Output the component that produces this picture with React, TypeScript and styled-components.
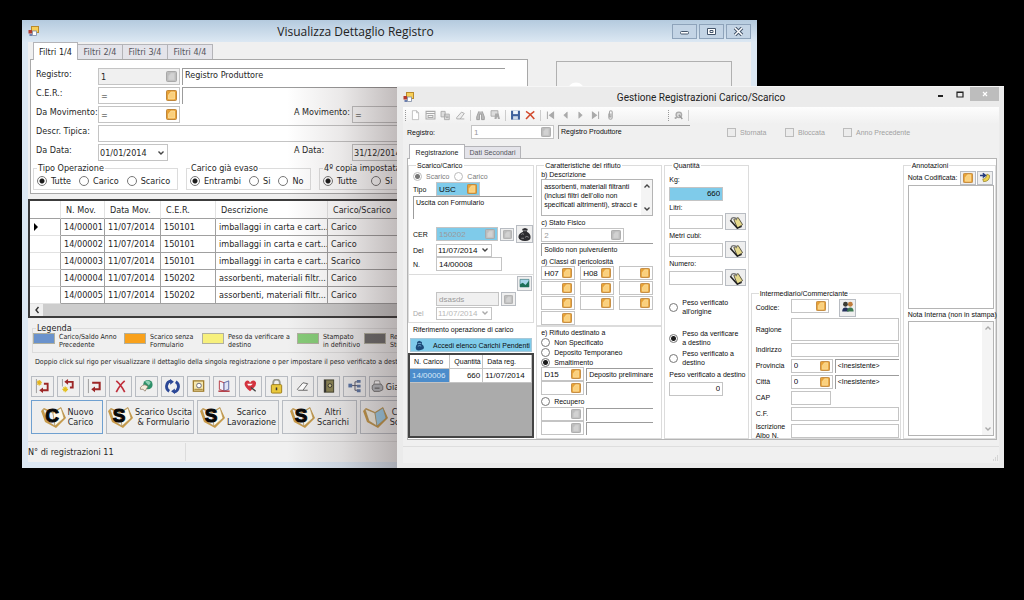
import React from "react";
import styled, { createGlobalStyle, css } from "styled-components";

const tahoma = `"DejaVu Sans Condensed", "DejaVu Sans", Tahoma, sans-serif`;
const sans = `"Liberation Sans", Arial, sans-serif`;

const GlobalStyle = createGlobalStyle`
  * { box-sizing: border-box; }
  body { margin: 0; background: #000; }
  button, input, select, textarea { font: inherit; color: inherit; margin: 0; border-radius: 0; }
  fieldset { margin: 0; padding: 0; min-width: 0; }
  svg { display: block; flex: none; }
`;

const Desktop = styled.main`
  position: relative;
  min-height: 100vh;
  overflow: hidden;
  background: #000;
`;

/* ---------- windows ---------- */

const BackWindow = styled.section`
  position: absolute;
  left: 22px;
  right: 267px;
  top: 20px;
  padding: 0 6px 6px;
  background: linear-gradient(#b4cade 0, #dce8f3 22px, #dde8f3 100%);
  font: 9px/10px ${tahoma};
  color: #262626;
`;

const FrontWindow = styled.section`
  position: absolute;
  left: 397px;
  right: 20px;
  top: 86px;
  padding: 0 5px 5px 6px;
  border-top: 1px solid #f6f6f6;
  background: #ebebeb;
  font: 7px/9px ${sans};
  color: #0c0c0c;
  &::before {
    content: "";
    position: absolute;
    top: 0;
    bottom: 0;
    right: 100%;
    width: 110px;
    pointer-events: none;
    background: linear-gradient(to left, rgba(50, 32, 32, 0.3), rgba(50, 32, 32, 0.1) 50%, transparent);
  }
`;

const BackTitleBar = styled.header`
  display: flex;
  align-items: center;
  gap: 2px;
  height: 22px;
  font: 12px/16px "Open Sans", "Segoe UI", sans-serif;
  color: #222;
`;

const FrontTitleBar = styled.header`
  display: grid;
  grid-template-columns: 1fr auto 1fr;
  align-items: center;
  height: 20px;
  font: 10px/14px Roboto, "Segoe UI", sans-serif;
  color: #222;
`;

const WindowTitle = styled.h1`
  flex: 1;
  margin: 0;
  padding-top: 2px;
  font: inherit;
  text-align: center;
`;

const Captions = styled.div`
  display: flex;
  align-self: start;
  justify-content: flex-end;
  gap: 2px;
`;

const CaptionButton = styled.button`
  display: grid;
  place-items: center;
  width: 25px;
  height: 15px;
  padding: 0;
  border: 1px solid #8ea3ba;
  background: #c3d4e5;
  color: #44556b;
`;

const FlatCaption = styled.button<{ $close?: boolean }>`
  display: grid;
  place-items: center;
  width: ${(p) => (p.$close ? 29 : 17)}px;
  height: 14px;
  padding: 0;
  border: 0;
  background: ${(p) => (p.$close ? "#bdbdbd" : "transparent")};
  color: ${(p) => (p.$close ? "#fff" : "#222")};
`;

const BackBody = styled.div`
  display: flex;
  flex-direction: column;
  background: #f0f0f0;
`;

/* ---------- tabs ---------- */

const TabList = styled.div<{ $small?: boolean }>`
  display: flex;
  align-items: flex-end;
  height: ${(p) => (p.$small ? 18 : 17)}px;
  padding-left: ${(p) => (p.$small ? 6 : 3)}px;
`;

const Tab = styled.button<{ $active?: boolean; $small?: boolean }>`
  width: ${(p) => (p.$small ? 56 : 45)}px;
  height: ${(p) => (p.$small ? 12 : 15)}px;
  padding: 0;
  border: 1px solid #b4b4b8;
  border-left-width: 0;
  border-bottom: 0;
  background: #e4e4ea;
  color: #55555c;
  white-space: nowrap;
  ${(p) =>
    p.$active &&
    css`
      position: relative;
      height: ${p.$small ? 15 : 18}px;
      margin-bottom: -1px;
      border-left-width: 1px;
      background: #fff;
      color: #222;
    `}
`;

/* ---------- shared controls ---------- */

const Group = styled.fieldset`
  border: 1px solid #dcdcdc;
`;

const Legend = styled.legend`
  margin-left: 3px;
  padding: 0 1px;
`;

const Radio = styled.input.attrs({ type: "radio" })`
  appearance: none;
  flex: none;
  width: 10px;
  height: 10px;
  margin: 0;
  border: 1px solid #777;
  border-radius: 50%;
  background: #fff;
  ${FrontWindow} & {
    width: 9px;
    height: 9px;
  }
  &:checked {
    background: radial-gradient(circle, #1c1c1c 0 2px, #fff 3px);
  }
  &:disabled {
    border-color: #bbb;
  }
  &:disabled:checked {
    background: radial-gradient(circle, #777 0 2px, #fff 3px);
  }
`;

const Choice = styled.label<{ $muted?: boolean }>`
  display: flex;
  align-items: center;
  gap: 4px;
  color: ${(p) => (p.$muted ? "#7a7a7a" : "inherit")};
  white-space: nowrap;
`;

type Tone = "white" | "blue" | "gray";
const tones: Record<Tone, string> = { white: "#fff", blue: "#7fcbea", gray: "#f0f0f0" };

const Field = styled.div<{ $w?: number; $h?: number; $tone?: Tone; $muted?: boolean }>`
  display: flex;
  align-items: center;
  flex: ${(p) => (p.$w ? "none" : "1")};
  width: ${(p) => (p.$w ? `${p.$w}px` : "auto")};
  min-width: 0;
  height: ${(p) => p.$h ?? 14}px;
  padding-right: 2px;
  border: 1px solid #c4c4c4;
  background: ${(p) => tones[p.$tone ?? "white"]};
  color: ${(p) => (p.$muted ? "#9a9a9a" : "inherit")};
  ${FrontWindow} & {
    font-size: 8px;
  }
`;

const FieldInput = styled.input<{ $right?: boolean }>`
  flex: 1;
  width: 100%;
  min-width: 0;
  height: 100%;
  padding: 0 0 0 2px;
  border: 0;
  background: transparent;
  outline: 0;
  text-align: ${(p) => (p.$right ? "right" : "left")};
`;

const Inset = styled.output<{ $w?: number; $h?: number }>`
  flex: ${(p) => (p.$w ? "none" : "1")};
  width: ${(p) => (p.$w ? `${p.$w}px` : "auto")};
  min-width: 0;
  height: ${(p) => p.$h ?? 14}px;
  padding: 1px 2px;
  overflow: hidden;
  border-top: 1px solid #9c9c9c;
  border-left: 1px solid #9c9c9c;
  white-space: nowrap;
`;

const PickButton = styled.button`
  flex: none;
  padding: 0;
  border: 0;
  background: transparent;
`;

const DateSelect = styled.select`
  appearance: none;
  flex: 1;
  min-width: 0;
  height: 100%;
  padding: 0 0 0 1px;
  border: 0;
  background: transparent;
  outline: 0;
`;

const ToolButton = styled.button<{ $w?: number; $h?: number }>`
  display: flex;
  flex: none;
  align-items: center;
  justify-content: center;
  gap: 2px;
  width: ${(p) => p.$w ?? 23}px;
  height: ${(p) => p.$h ?? 21}px;
  padding: 0;
  border: 1px solid #b8bcc2;
  background: #efefef;
  white-space: nowrap;
`;

/* ---------- icons ---------- */

const PickIcon = ({ size = 11, off = false }: { size?: number; off?: boolean }) => (
  <svg width={size} height={size} viewBox="0 0 11 11" aria-hidden="true">
    <rect x=".5" y=".5" width="10" height="10" rx="1" fill={off ? "#bdbdbd" : "#e8a236"} stroke={off ? "#a8a8a8" : "#c0863a"} />
    <path d="M2.500 9V5l2.500-3h3.500v7z" fill={off ? "#d2d2d2" : "#fbd07c"} stroke={off ? "#c8c8c8" : "#fbe3a8"} strokeWidth=".7" />
  </svg>
);

const Chevron = ({ color = "#444" }: { color?: string }) => (
  <svg width="8" height="6" viewBox="0 0 8 6" aria-hidden="true">
    <path d="M1.500 1.500L4 4l2.500-2.500" fill="none" stroke={color} strokeWidth="1.400" />
  </svg>
);

const AppIcon = () => (
  <svg width="11" height="11" viewBox="0 0 11 11" aria-hidden="true">
    <rect x="3.500" y=".5" width="7" height="6" fill="#f7cf58" stroke="#b98a2c" />
    <rect x=".5" y="4" width="3.500" height="3.500" fill="#b23b2e" />
    <rect x="4.500" y="5" width="4" height="4.500" fill="#fff" stroke="#7d8aa5" strokeWidth=".8" />
    <rect x="1.500" y="8" width="2.500" height="2" fill="#6c7fae" />
  </svg>
);

const BookIcon = ({ letter }: { letter?: string }) => (
  <svg width="25" height="22" viewBox="0 0 25 22" aria-hidden="true">
    <path d="M0 5l3-3 9 4 8-5 5 11-10 10-11-6z" fill="#c79a48" />
    <path d="M2 3l10 4 2 13-8-5z" fill={letter ? "#eef2f8" : "#f6f3e6"} stroke="#a98d58" strokeWidth=".6" />
    <path d="M20 2l-8 5 2 13 9-8z" fill={letter ? "#fdf9ea" : "#9fd0ea"} stroke="#a98d58" strokeWidth=".6" />
    {letter && (
      <text x="11" y="16" textAnchor="middle" fontFamily="Liberation Sans, sans-serif" fontWeight="700" fontSize="19" fill="#080808" stroke="#080808">
        {letter}
      </text>
    )}
  </svg>
);

const toolArt: Record<string, React.ReactNode> = {
  in: (
    <>
      <path d="M4 1v6M1 4h6M2 2l4 4M6 2L2 6" stroke="#e3b31c" strokeWidth="1.300" />
      <path d="M9 5h4v7H7" fill="none" stroke="#9c2626" strokeWidth="2" />
      <path d="M8 9v6l-4-3z" fill="#9c2626" />
      <path d="M1 0v15" stroke="#999" />
    </>
  ),
  out: (
    <>
      <path d="M4 8v6M1 11h6M2 9l4 4M6 9l-4 4" stroke="#e3c01c" strokeWidth="1.300" />
      <path d="M6 3h6v6H9" fill="none" stroke="#9c2626" strokeWidth="2" />
      <path d="M7 0v6L3 3z" fill="#9c2626" />
      <path d="M1 0v8" stroke="#999" />
    </>
  ),
  back: (
    <>
      <path d="M5 4h8v7H7" fill="none" stroke="#9c2626" strokeWidth="2.200" />
      <path d="M8 8v6l-4-3z" fill="#9c2626" />
      <path d="M1 0v15" stroke="#999" />
    </>
  ),
  del: <path d="M3 2q5 4 9 12M12 2Q7 6 3 14" fill="none" stroke="#c02f3c" strokeWidth="1.800" />,
  globe: (
    <>
      <circle cx="9" cy="6" r="5" fill="#2d8f68" />
      <path d="M6 3q3-3 6 1l-2 3z" fill="#8fd0b4" />
      <path d="M1 9q4-5 8-1l-3 5q-2-3-5-2z" fill="#f5ebdc" stroke="#8a7a66" strokeWidth=".8" />
    </>
  ),
  sync: (
    <>
      <path d="M6 2a6 6 0 0 0-2 11M9 14a6 6 0 0 0 2-11" fill="none" stroke="#2b4796" strokeWidth="3" />
      <path d="M5 0l4 3-4 3zM10 10l-4 3 4 3z" fill="#2b4796" />
    </>
  ),
  safe: (
    <>
      <rect x="2" y="2" width="11" height="11" fill="#f5e7b0" stroke="#a07c2c" strokeWidth="1.400" />
      <circle cx="8" cy="7" r="2.500" fill="#fff" stroke="#667" />
      <path d="M3 11h9" stroke="#a07c2c" />
    </>
  ),
  book: (
    <>
      <path d="M2 2l5 2v9l-5-2z" fill="#f1f1fa" stroke="#b43a42" />
      <path d="M12 2L7 4v9l5-2z" fill="#dfe3f5" stroke="#5a68a8" />
      <path d="M1 13h12" stroke="#b43a42" strokeWidth="1.600" />
    </>
  ),
  heart: (
    <>
      <path d="M7 13Q-1 7 2 3q3-3 5 1 3-4 6-1 2 4-6 10z" fill="#d4343f" />
      <path d="M4 5h6l-2 2H5z" fill="#fff" />
      <path d="M8 9l5 4" stroke="#444" strokeWidth="1.400" />
    </>
  ),
  lock: (
    <>
      <path d="M4 7V4a3 3 0 0 1 7 0v3" fill="none" stroke="#9b9b8c" strokeWidth="2" />
      <rect x="2" y="6" width="11" height="9" rx="1" fill="#e9c83c" stroke="#9c7c18" />
      <path d="M7.500 9v3" stroke="#333" strokeWidth="1.600" />
    </>
  ),
  eraser: <path d="M2 11l6-7 5 1-5 7H3zM8 12h5" fill="#fff" stroke="#666" />,
  cabinet: (
    <>
      <rect x="3" y="1" width="10" height="13" fill="#8a8455" stroke="#40402c" />
      <path d="M4 1v13" stroke="#333" strokeWidth="2" />
      <circle cx="9" cy="7" r="2" fill="#d8d090" stroke="#333" />
    </>
  ),
  tree: (
    <>
      <path d="M4 7h4M8 3v9M8 3h3M8 7h3M8 12h3" stroke="#556" fill="none" />
      <rect x="1" y="5" width="4" height="4" fill="#5a76a8" />
      <path d="M10 1h4v3h-4zM10 6h4v3h-4zM10 11h4v3h-4z" fill="#5f77a4" />
    </>
  ),
  printer: (
    <>
      <path d="M4 1h6l1 5H3z" fill="#fff" stroke="#888" />
      <path d="M1 7l3-2h8l2 3v4l-4 2H3l-2-3z" fill="#b8bcc0" stroke="#666" />
      <path d="M4 10h6" stroke="#444" />
    </>
  ),
  mail: <path d="M3 1h6l3 3v10H3zM9 1v3h3" fill="#fff" stroke="#aaa" />,
  grid: <path d="M1 2h13v11H1zM1 5h13M4 8h7v3H4z" fill="none" stroke="#aaa" strokeWidth="1.500" />,
  copy: <path d="M1 2h6v8H1zM6 6h7v8H6zM8 9h4M8 11h4" fill="#ddd" stroke="#aaa" strokeWidth="1.300" />,
  wipe: <path d="M2 11l7-8 4 2-6 8H2l0-2M7 13h6" fill="#eee" stroke="#aaa" strokeWidth="1.300" />,
  find: <path d="M5 2L2 10v4h4V6h3v8h4v-4l-3-8" fill="#bbb" stroke="#9a9a9a" strokeWidth="1.300" />,
  findIn: (
    <>
      <path d="M1 1h10v8H1z" fill="#ddd" stroke="#aaa" strokeWidth="1.300" />
      <path d="M7 5l-1 8h3l1-4 1 4h3l-2-8z" fill="#aaa" />
    </>
  ),
  save: (
    <>
      <path d="M1 1h13v13H1z" fill="#3e5f9c" />
      <path d="M4 1h7v5H4z" fill="#eef3fb" />
      <path d="M4 9h7v5H4z" fill="#cdd8ea" />
    </>
  ),
  remove: <path d="M1 2q7 4 12 11M13 2Q7 6 1 13" fill="none" stroke="#d2492c" strokeWidth="2.200" />,
  first: <path d="M3 2v11M12 3l-6 4.500 6 4.500z" fill="#aaa" stroke="#aaa" strokeWidth="1.500" />,
  prev: <path d="M10 3L5 7.500l5 4.500z" fill="#aaa" stroke="#aaa" />,
  next: <path d="M5 3l5 4.500L5 12z" fill="#aaa" stroke="#aaa" />,
  last: <path d="M12 2v11M3 3l6 4.500L3 12z" fill="#aaa" stroke="#aaa" strokeWidth="1.500" />,
  clip: <path d="M5 5v6a2 2 0 0 0 5 0V3a2 2 0 0 0-4 0v7h2V5" fill="none" stroke="#a5a5a5" strokeWidth="1.500" />,
  gear: (
    <>
      <circle cx="8" cy="7" r="4" fill="#ddd" stroke="#aaa" strokeWidth="2" />
      <path d="M2 12l3-1M8 7l5 6" stroke="#999" strokeWidth="2" />
    </>
  ),
  bag: (
    <>
      <path d="M5 2l3-1 3 1-1 3q4 2 4 6 0 4-6 4t-7-4q0-4 5-6z" fill="#2c2c30" />
      <path d="M4 8q2-2 3 0M8 11q2-2 4 0M6 4h4M4 12h3" stroke="#8c8c90" fill="none" />
    </>
  ),
  blueBag: (
    <>
      <path d="M4 3l3-2 4 2v3q3 2 3 5t-6 4-6-4q0-3 2-5z" fill="#1c4a78" />
      <path d="M5 5h5M5 9q3-2 5 0" stroke="#8cc4e8" fill="none" />
    </>
  ),
  picture: (
    <>
      <path d="M1 2h13v11H1z" fill="#a8d6ea" stroke="#3f7c80" />
      <path d="M1 13V9l4-2 4 3 5-6v9z" fill="#1d7058" />
    </>
  ),
  scale: (
    <>
      <path d="M5 5l5-2 5 8-6 4z" fill="#e5d98c" stroke="#4a4632" />
      <path d="M2 6a3 3 0 1 1 6 0" fill="none" stroke="#777" strokeWidth="1.400" />
      <path d="M1 6l8 9 5-2" fill="none" stroke="#222" strokeWidth="1.800" />
    </>
  ),
  people: (
    <>
      <circle cx="5" cy="4" r="3" fill="#3c3c34" />
      <circle cx="11" cy="4" r="3" fill="#c07c3c" />
      <path d="M1 13q0-5 4-5t4 5z" fill="#24305c" />
      <path d="M7 13q0-5 4-5t4 5z" fill="#3f7a52" />
    </>
  ),
  pen: (
    <>
      <path d="M5 10q5 1 6-7l4 2q0 9-9 9z" fill="#f0d44c" stroke="#8c7a24" />
      <path d="M1 5h6M5 2l4 3-4 3" fill="none" stroke="#263c7c" strokeWidth="2.200" />
    </>
  ),
};

const Art = ({ name, size = 15 }: { name: string; size?: number }) => (
  <svg width={size} height={size} viewBox="0 0 15 16" aria-hidden="true">
    {toolArt[name]}
  </svg>
);

/* ---------- back window parts ---------- */

const FilterArea = styled.div`
  display: grid;
  grid-template-columns: minmax(0, 498fr) minmax(0, 176fr);
  align-items: end;
  gap: 28px;
  padding: 0 19px 0 2px;
`;

const FilterColumn = styled.div`
  min-width: 0;
`;

const LogoBox = styled.div`
  height: 133px;
  padding: 20px 10px;
  border: 1px solid #b0b0b0;
`;

const FilterPanel = styled.div`
  display: flex;
  flex-direction: column;
  gap: 2px;
  height: 135px;
  padding: 8px 0 0 5px;
  border: 1px solid #a8a8a8;
  background: #fff;
`;

const FilterRow = styled.div`
  display: grid;
  grid-template-columns: 60px 82px 110px 56px 1fr;
  gap: 2px;
  white-space: nowrap;
`;

const FilterLabel = styled.label`
  padding-top: 1px;
`;

const Wide = styled.div<{ $from: number }>`
  display: flex;
  grid-column: ${(p) => p.$from} / -1;
`;

const GroupRow = styled.div`
  display: grid;
  grid-template-columns: 145px 125px 1fr;
  gap: 8px;
  margin-left: -3px;
`;

const Choices = styled.div<{ $gap?: number }>`
  display: flex;
  align-items: center;
  gap: ${(p) => p.$gap ?? 8}px;
  height: 16px;
  padding-left: 3px;
`;

const GridFrame = styled.div`
  margin-top: 5px;
  border: 2px solid #3c3c3c;
  background: #fff;
  overflow: hidden;
`;

const Movements = styled.table`
  width: 100%;
  table-layout: fixed;
  border-collapse: separate;
  border-spacing: 0;
  th,
  td {
    height: 17px;
    padding: 0 3px;
    overflow: hidden;
    border-right: 1px solid #a0a0a0;
    border-bottom: 1px solid #a0a0a0;
    font-weight: 400;
    text-align: left;
    white-space: nowrap;
  }
  thead th {
    height: 18px;
    padding: 0 5px;
    border-right-color: #e2e2e2;
  }
  tbody th {
    border-bottom-color: #e2e2e2;
  }
`;

const ScrollTrack = styled.div`
  display: flex;
  height: 12px;
  background: #f0f0f0;
`;

const ScrollArrow = styled.button`
  display: grid;
  place-items: center;
  width: 13px;
  padding: 0;
  border: 0;
  background: #f0f0f0;
`;

const ScrollThumb = styled.div`
  flex: 1;
  background: #cdcdcd;
`;

const LegendGroup = styled(Group)`
  margin: 5px 4px 0;
`;

const LegendRow = styled.div`
  display: grid;
  grid-template-columns: 91px 78px 95px 67px 1fr;
  height: 19px;
  font: 7px/8px ${tahoma};
`;

const LegendItem = styled.div`
  display: flex;
  gap: 4px;
  white-space: nowrap;
`;

const Swatch = styled.span<{ $color: string }>`
  flex: none;
  width: 22px;
  height: 11px;
  border: 1px solid #b0b0a0;
  background: ${(p) => p.$color};
`;

const Hint = styled.p`
  margin: 4px 7px 0;
  font: 7px/10px ${tahoma};
  white-space: nowrap;
`;

const ButtonStrip = styled.div<{ $top: number }>`
  display: flex;
  gap: 3px;
  margin: ${(p) => p.$top}px 3px 0;
`;

const BigButton = styled.button<{ $w: number; $focus?: boolean }>`
  display: flex;
  flex: none;
  align-items: center;
  justify-content: center;
  gap: 2px;
  width: ${(p) => p.$w}px;
  height: 34px;
  padding: 0;
  border: 1px solid ${(p) => (p.$focus ? "#6fa0d0" : "#b8bcc2")};
  background: #eeeeee;
  white-space: pre;
`;

const StatusBar = styled.footer`
  display: flex;
  align-items: center;
  height: 21px;
  margin-top: 7px;
  border-top: 1px solid #dcdcdc;
`;

const StatusCell = styled.span`
  width: 158px;
  padding: 4px 0;
  border-right: 1px solid #dcdcdc;
`;

/* ---------- front window parts ---------- */

const ToolBar = styled.div`
  display: flex;
  align-items: center;
  gap: 4px;
  height: 17px;
  padding-left: 2px;
  background: linear-gradient(#fdfdfd, #f0f0f0);
`;

const IconButton = styled.button`
  padding: 0;
  border: 0;
  background: transparent;
`;

const Divider = styled.span<{ $grip?: boolean }>`
  width: 1px;
  height: 11px;
  border-left: 1px ${(p) => (p.$grip ? "dotted #999" : "solid #ccc")};
`;

const Spacer = styled.span<{ $w: number }>`
  flex: none;
  width: ${(p) => p.$w}px;
`;

const RegisterRow = styled.div`
  display: flex;
  align-items: center;
  gap: 4px;
  height: 16px;
  padding-left: 4px;
  background: #f0f0f0;
`;

const RegisterLabel = styled.label`
  width: 60px;
`;

const CheckLabel = styled.label`
  display: flex;
  align-items: center;
  gap: 4px;
  width: 54px;
  color: #a0a0a0;
  white-space: nowrap;
`;

const CheckBox = styled.input.attrs({ type: "checkbox" })`
  appearance: none;
  flex: none;
  width: 9px;
  height: 9px;
  margin: 0;
  border: 1px solid #bcbcbc;
  background: #ececec;
`;

const FrontBody = styled.div`
  background: #f0f0f0;
`;

const Sheet = styled.div`
  display: grid;
  grid-template-columns: 127fr 127fr 85fr 151fr 94fr;
  gap: 2px;
  height: 282px;
  margin: 0 2px 0 4px;
  padding-top: 2px;
  border: 1px solid #b4b4b4;
  background: #fff;
`;

const Column = styled.div`
  display: flex;
  flex-direction: column;
  min-width: 0;
`;

const ColumnGroup = styled(Group)<{ $fill?: boolean; $top?: number }>`
  display: flex;
  flex-direction: column;
  flex: ${(p) => (p.$fill ? "1" : "none")};
  margin-top: ${(p) => p.$top ?? 0}px;
  padding: 0 1px 0 4px;
  white-space: nowrap;
`;

const Line = styled.div<{ $h?: number; $gap?: number; $top?: number; $end?: boolean }>`
  display: flex;
  flex: none;
  align-items: center;
  justify-content: ${(p) => (p.$end ? "flex-end" : "flex-start")};
  gap: ${(p) => p.$gap ?? 2}px;
  height: ${(p) => p.$h ?? 14}px;
  margin-top: ${(p) => p.$top ?? 0}px;
`;

const Caption = styled.label<{ $w?: number; $muted?: boolean }>`
  flex: none;
  width: ${(p) => (p.$w ? `${p.$w}px` : "auto")};
  color: ${(p) => (p.$muted ? "#a8a8a8" : "inherit")};
`;

const Section = styled.div`
  display: flex;
  flex-direction: column;
  height: 48px;
  padding: 0 1px 0 4px;
  border: 1px solid #dcdcdc;
  border-top: 0;
`;

const Reference = styled.p`
  margin: 2px 5px;
  height: 11px;
`;

const PendingButton = styled.button`
  display: flex;
  flex: none;
  align-items: center;
  gap: 8px;
  height: 14px;
  margin: 0 2px 1px;
  padding: 0 3px;
  border: 1px solid #a8c8d8;
  background: #7fcbea;
  white-space: nowrap;
`;

const LoadFrame = styled.div`
  flex: 1;
  border: 2px solid #444;
  margin-bottom: 1px;
  background: #ababab;
`;

const LoadTable = styled.table`
  width: 100%;
  table-layout: fixed;
  border-collapse: separate;
  border-spacing: 0;
  background: #fff;
  th,
  td {
    height: 14px;
    padding: 0 2px;
    border-right: 1px solid #c4c4c4;
    border-bottom: 1px solid #c4c4c4;
    font-weight: 400;
    text-align: left;
    white-space: nowrap;
  }
  th {
    padding-left: 4px;
  }
  td {
    font-size: 8px;
  }
  td:first-child {
    background: #4b8ccb;
    color: #d8e8f8;
  }
  td:nth-child(2) {
    text-align: right;
  }
`;

const ScrollBox = styled.div<{ $w?: number; $h?: number; $grow?: number }>`
  display: flex;
  flex: ${(p) => p.$grow ?? "none"};
  width: ${(p) => (p.$w ? `${p.$w}px` : "auto")};
  height: ${(p) => (p.$h ? `${p.$h}px` : "auto")};
  min-height: 0;
  border: 1px solid #b4b4b4;
`;

const TextArea = styled.textarea`
  flex: 1;
  min-width: 0;
  padding: 2px;
  overflow: hidden;
  resize: none;
  border: 0;
  outline: 0;
  background: transparent;
`;

const ScrollRail = styled.div`
  display: flex;
  flex-direction: column;
  justify-content: space-between;
  align-items: center;
  width: 11px;
  padding: 3px 0;
  background: #f4f4f4;
  svg:first-child {
    transform: rotate(180deg);
  }
`;

const HazardGrid = styled.div`
  display: grid;
  grid-template-columns: repeat(3, 34px);
  gap: 1px 5px;
`;

const PersonRow = styled.div<{ $h?: number }>`
  display: grid;
  grid-template-columns: 35px 1fr;
  align-items: center;
  height: ${(p) => p.$h ?? 15}px;
  margin-bottom: 1px;
`;

const PersonFields = styled.div`
  display: flex;
  gap: 2px;
`;

const FrontStatus = styled.footer`
  display: flex;
  justify-content: flex-end;
  align-items: flex-end;
  height: 17px;
  margin-top: 6px;
  border-top: 1px solid #dedede;
`;

/* ---------- composed controls ---------- */

type PickProps = {
  id?: string;
  label?: string;
  value?: string;
  w?: number;
  h?: number;
  tone?: Tone;
  off?: boolean;
  size?: number;
};

const PickField = ({ id, label, value = "", w, h, tone, off, size = 10 }: PickProps) => (
  <Field $w={w} $h={h} $tone={tone} $muted={off && size < 11}>
    <FieldInput id={id} aria-label={label} defaultValue={value} readOnly={off} />
    <PickButton type="button" aria-label={`Cerca ${label ?? value}`}>
      <PickIcon size={size} off={off} />
    </PickButton>
  </Field>
);

type TextProps = { id?: string; label?: string; value?: string; w?: number; h?: number; tone?: Tone; right?: boolean };

const TextField = ({ id, label, value = "", w, h, tone, right }: TextProps) => (
  <Field $w={w} $h={h} $tone={tone}>
    <FieldInput id={id} aria-label={label} defaultValue={value} $right={right} />
  </Field>
);

const DateField = ({ id, value, w, h, off }: { id: string; value: string; w: number; h?: number; off?: boolean }) => (
  <Field $w={w} $h={h} $muted={off}>
    <DateSelect id={id} disabled={off} defaultValue={value}>
      <option>{value}</option>
    </DateSelect>
    <Chevron color={off ? "#aaa" : "#444"} />
  </Field>
);

const movements = [
  ["14/00001", "11/07/2014", "150101", "imballaggi in carta e cart...", "Carico"],
  ["14/00002", "11/07/2014", "150101", "imballaggi in carta e cart...", "Carico"],
  ["14/00003", "11/07/2014", "150101", "imballaggi in carta e cart...", "Scarico"],
  ["14/00004", "11/07/2014", "150202", "assorbenti, materiali filtr...", "Carico"],
  ["14/00005", "11/07/2014", "150202", "assorbenti, materiali filtr...", "Carico"],
];

const legendItems: [string, string, string][] = [
  ["#6a92cc", "Carico/Saldo Anno", "Precedente"],
  ["#f9a11b", "Scarico senza", "Formulario"],
  ["#f7f07c", "Peso da verificare a", "destino"],
  ["#86cc78", "Stampato", "in definitivo"],
  ["#6e6e6e", "Registrazione", "Stornata"],
];

const tools = ["in", "out", "back", "del", "globe", "sync", "safe", "book", "heart", "lock", "eraser", "cabinet", "tree"];

const hazards = ["H07", "H08", "", "", "", "", "", "", "", ""];

function RegisterWindow() {
  return (
    <BackWindow aria-label="Visualizza Dettaglio Registro">
      <BackTitleBar>
        <AppIcon />
        <WindowTitle>Visualizza Dettaglio Registro</WindowTitle>
        <CaptionButton aria-label="Riduci">
          <svg width="11" height="9" viewBox="0 0 11 9">
            <rect x="1.500" y="4.500" width="8" height="2.500" rx="1" fill="#fff" stroke="currentColor" />
          </svg>
        </CaptionButton>
        <CaptionButton aria-label="Ingrandisci">
          <svg width="11" height="9" viewBox="0 0 11 9">
            <path d="M1.500 1.500h8v6h-8zM4 3.500h3v2H4z" fill="#fff" stroke="currentColor" />
          </svg>
        </CaptionButton>
        <CaptionButton aria-label="Chiudi">
          <svg width="11" height="9" viewBox="0 0 11 9">
            <path d="M2 1l7 7M9 1L2 8" stroke="currentColor" strokeWidth="3.500" />
            <path d="M2 1l7 7M9 1L2 8" stroke="#fff" strokeWidth="1.500" />
          </svg>
        </CaptionButton>
      </BackTitleBar>
      <BackBody>
        <FilterArea>
          <FilterColumn>
            <TabList role="tablist">
              <Tab role="tab" $active>Filtri 1/4</Tab>
              <Tab role="tab">Filtri 2/4</Tab>
              <Tab role="tab">Filtri 3/4</Tab>
              <Tab role="tab">Filtri 4/4</Tab>
            </TabList>
            <FilterPanel>
              <FilterRow>
                <FilterLabel htmlFor="registro">Registro:</FilterLabel>
                <PickField id="registro" value="1" w={82} h={17} tone="gray" off size={11} />
                <Wide $from={3}><Inset $h={17}>Registro Produttore</Inset><Spacer $w={22} /></Wide>
              </FilterRow>
              <FilterRow>
                <FilterLabel htmlFor="cer">C.E.R.:</FilterLabel>
                <PickField id="cer" value="=" w={82} h={17} size={11} />
                <Wide $from={3}><Inset $h={17} /></Wide>
              </FilterRow>
              <FilterRow>
                <FilterLabel htmlFor="da-mov">Da Movimento:</FilterLabel>
                <PickField id="da-mov" value="=" w={82} h={17} size={11} />
                <span />
                <FilterLabel htmlFor="a-mov">A Movimento:</FilterLabel>
                <PickField id="a-mov" value="=" w={82} h={17} size={11} />
              </FilterRow>
              <FilterRow>
                <FilterLabel htmlFor="descr">Descr. Tipica:</FilterLabel>
                <Wide $from={2}><TextField id="descr" h={17} /></Wide>
              </FilterRow>
              <FilterRow>
                <FilterLabel htmlFor="da-data">Da Data:</FilterLabel>
                <DateField id="da-data" value="01/01/2014" w={70} h={17} />
                <span />
                <FilterLabel htmlFor="a-data">A Data:</FilterLabel>
                <DateField id="a-data" value="31/12/2014" w={70} h={17} />
              </FilterRow>
              <GroupRow>
                <Group>
                  <Legend>Tipo Operazione</Legend>
                  <Choices>
                    <Choice><Radio name="tipo" defaultChecked />Tutte</Choice>
                    <Choice><Radio name="tipo" />Carico</Choice>
                    <Choice><Radio name="tipo" />Scarico</Choice>
                  </Choices>
                </Group>
                <Group>
                  <Legend>Carico già evaso</Legend>
                  <Choices>
                    <Choice><Radio name="evaso" defaultChecked />Entrambi</Choice>
                    <Choice><Radio name="evaso" />Si</Choice>
                    <Choice><Radio name="evaso" />No</Choice>
                  </Choices>
                </Group>
                <Group>
                  <Legend>4º copia impostata</Legend>
                  <Choices $gap={14}>
                    <Choice><Radio name="copia" defaultChecked />Tutte</Choice>
                    <Choice><Radio name="copia" />Si</Choice>
                    <Choice><Radio name="copia" />No</Choice>
                  </Choices>
                </Group>
              </GroupRow>
            </FilterPanel>
          </FilterColumn>
          <LogoBox>
            <svg width="18" height="18" viewBox="0 0 18 18" aria-hidden="true">
              <circle cx="9" cy="9" r="8.500" fill="#fff" />
            </svg>
          </LogoBox>
        </FilterArea>
        <GridFrame>
          <Movements>
            <colgroup>
              <col style={{ width: 31 }} />
              <col style={{ width: 44 }} />
              <col style={{ width: 56 }} />
              <col style={{ width: 55 }} />
              <col style={{ width: 112 }} />
              <col />
            </colgroup>
            <thead>
              <tr>
                <th aria-label="Selezione" />
                <th>N. Mov.</th>
                <th>Data Mov.</th>
                <th>C.E.R.</th>
                <th>Descrizione</th>
                <th>Carico/Scarico</th>
              </tr>
            </thead>
            <tbody>
              {movements.map((row, i) => (
                <tr key={row[0]}>
                  <th scope="row">
                    {i === 0 && (
                      <svg width="6" height="8" viewBox="0 0 6 8" aria-label="Riga corrente">
                        <path d="M1 0l4 4-4 4z" fill="#000" />
                      </svg>
                    )}
                  </th>
                  {row.map((cell, j) => (
                    <td key={j}>{cell}</td>
                  ))}
                </tr>
              ))}
            </tbody>
          </Movements>
          <ScrollTrack>
            <ScrollArrow aria-label="Scorri a sinistra">
              <svg width="6" height="8" viewBox="0 0 6 8">
                <path d="M4.500 1L2 4l2.500 3" fill="none" stroke="#333" strokeWidth="1.400" />
              </svg>
            </ScrollArrow>
            <ScrollThumb />
          </ScrollTrack>
        </GridFrame>
        <LegendGroup>
          <Legend>Legenda</Legend>
          <LegendRow>
            {legendItems.map(([color, a, b]) => (
              <LegendItem key={a}>
                <Swatch $color={color} />
                <span>{a}<br />{b}</span>
              </LegendItem>
            ))}
          </LegendRow>
        </LegendGroup>
        <Hint>Doppio click sul rigo per visualizzare il dettaglio della singola registrazione o per impostare il peso verificato a destino</Hint>
        <ButtonStrip $top={9}>
          {tools.map((t) => (
            <ToolButton key={t} aria-label={t}><Art name={t} /></ToolButton>
          ))}
          <ToolButton $w={56}><Art name="printer" size={13} />Giacenze</ToolButton>
        </ButtonStrip>
        <ButtonStrip $top={3}>
          <BigButton $w={72} $focus><BookIcon letter="C" />{"Nuovo\nCarico"}</BigButton>
          <BigButton $w={88}><BookIcon letter="S" />{"Scarico Uscita\n& Formulario"}</BigButton>
          <BigButton $w={82}><BookIcon letter="S" />{"Scarico\nLavorazione"}</BigButton>
          <BigButton $w={75}><BookIcon letter="S" />{"Altri\nScarichi"}</BigButton>
          <BigButton $w={62}><BookIcon />{"Carico\nScarico"}</BigButton>
        </ButtonStrip>
        <StatusBar><StatusCell>N° di registrazioni 11</StatusCell></StatusBar>
      </BackBody>
    </BackWindow>
  );
}

function EntryWindow() {
  return (
    <FrontWindow aria-label="Gestione Registrazioni Carico/Scarico">
      <FrontTitleBar>
        <AppIcon />
        <WindowTitle>Gestione Registrazioni Carico/Scarico</WindowTitle>
        <Captions>
          <FlatCaption aria-label="Riduci">
            <svg width="7" height="7" viewBox="0 0 7 7"><path d="M1 5h5" stroke="currentColor" strokeWidth="2" /></svg>
          </FlatCaption>
          <FlatCaption aria-label="Ingrandisci">
            <svg width="8" height="7" viewBox="0 0 8 7"><path d="M1 1h6v5H1zM1 1.500h6" fill="none" stroke="currentColor" strokeWidth="1.200" /></svg>
          </FlatCaption>
          <FlatCaption $close aria-label="Chiudi">
            <svg width="6" height="6" viewBox="0 0 6 6"><path d="M1 1l4 4M5 1L1 5" stroke="currentColor" strokeWidth="1.200" /></svg>
          </FlatCaption>
        </Captions>
      </FrontTitleBar>
      <FrontBody>
        <ToolBar role="toolbar">
          <Divider $grip />
          {["mail", "grid", "copy", "wipe"].map((t) => <IconButton key={t} aria-label={t}><Art name={t} size={11} /></IconButton>)}
          <Divider />
          {["find", "findIn"].map((t) => <IconButton key={t} aria-label={t}><Art name={t} size={11} /></IconButton>)}
          <Divider />
          {["save", "remove"].map((t) => <IconButton key={t} aria-label={t}><Art name={t} size={11} /></IconButton>)}
          <Divider />
          {["first", "prev", "next", "last", "clip"].map((t) => <IconButton key={t} aria-label={t}><Art name={t} size={11} /></IconButton>)}
          <Spacer $w={44} />
          <Divider $grip />
          <IconButton aria-label="Opzioni"><Art name="gear" size={11} /></IconButton>
          <Divider />
        </ToolBar>
        <RegisterRow>
          <RegisterLabel htmlFor="reg2">Registro:</RegisterLabel>
          <PickField id="reg2" value="1" w={83} off />
          <Inset $w={132}>Registro Produttore</Inset>
          <Spacer $w={29} />
          <CheckLabel><CheckBox disabled />Stornata</CheckLabel>
          <CheckLabel><CheckBox disabled />Bloccata</CheckLabel>
          <CheckLabel><CheckBox disabled />Anno Precedente</CheckLabel>
        </RegisterRow>
        <TabList $small role="tablist">
          <Tab $small $active role="tab">Registrazione</Tab>
          <Tab $small role="tab">Dati Secondari</Tab>
        </TabList>
        <Sheet>
          <Column>
            <ColumnGroup>
              <Legend>Scarico/Carico</Legend>
              <Line $h={12} $gap={5}>
                <Choice $muted><Radio name="verso" defaultChecked disabled />Scarico</Choice>
                <Choice $muted><Radio name="verso" disabled />Carico</Choice>
              </Line>
              <Line>
                <Caption $w={21} htmlFor="tipo2">Tipo</Caption>
                <PickField id="tipo2" value="USC" w={44} tone="blue" />
              </Line>
              <Line $h={23}><Inset $h={23}>Uscita con Formulario</Inset></Line>
              <Line $h={18} $top={6}>
                <Caption $w={21} htmlFor="cer2">CER</Caption>
                <PickField id="cer2" value="150202" w={62} tone="blue" off />
                <ToolButton $w={14} $h={13} aria-label="Dettaglio CER"><PickIcon size={9} off /></ToolButton>
                <ToolButton $w={17} $h={18} aria-label="Rifiuto"><Art name="bag" size={15} /></ToolButton>
              </Line>
              <Line>
                <Caption $w={21} htmlFor="del1">Del</Caption>
                <DateField id="del1" value="11/07/2014" w={56} h={13} />
              </Line>
              <Line>
                <Caption $w={21} htmlFor="num1">N.</Caption>
                <TextField id="num1" value="14/00008" w={66} />
              </Line>
              <Line $h={3} />
            </ColumnGroup>
            <Section>
              <Line $h={17} $end>
                <ToolButton $w={15} $h={15} aria-label="Immagine"><Art name="picture" size={11} /></ToolButton>
              </Line>
              <Line>
                <Spacer $w={21} />
                <Field $w={63} $tone="gray" $muted><FieldInput aria-label="Formulario" defaultValue="dsasds" readOnly /></Field>
                <ToolButton $w={15} $h={14} aria-label="Scegli formulario"><PickIcon size={9} off /></ToolButton>
              </Line>
              <Line>
                <Caption $w={21} $muted htmlFor="del2">Del</Caption>
                <DateField id="del2" value="11/07/2014" w={56} h={13} off />
              </Line>
            </Section>
            <Reference>Riferimento operazione di carico</Reference>
            <PendingButton><Art name="blueBag" size={11} />Accedi elenco Carichi Pendenti</PendingButton>
            <LoadFrame>
              <LoadTable>
                <colgroup>
                  <col style={{ width: "33%" }} />
                  <col style={{ width: "27%" }} />
                  <col />
                </colgroup>
                <thead><tr><th>N. Carico</th><th>Quantità</th><th>Data reg.</th></tr></thead>
                <tbody><tr><td>14/00006</td><td>660</td><td>11/07/2014</td></tr></tbody>
              </LoadTable>
            </LoadFrame>
          </Column>

          <Column>
            <ColumnGroup>
              <Legend>Caratteristiche del rifiuto</Legend>
              <Line $h={9}><Caption htmlFor="descr2">b) Descrizione</Caption></Line>
              <ScrollBox $w={112} $h={37}>
                <TextArea id="descr2" defaultValue={"assorbenti, materiali filtranti\n(inclusi filtri dell'olio non\nspecificati altrimenti), stracci e"} />
                <ScrollRail><Chevron /><Chevron /></ScrollRail>
              </ScrollBox>
              <Line $h={12}><Caption htmlFor="stato">c) Stato Fisico</Caption></Line>
              <PickField id="stato" value="2" w={83} off />
              <Line><Inset $w={112} $h={13}>Solido non pulverulento</Inset></Line>
              <Line $h={10}><Caption as="span">d) Classi di pericolosità</Caption></Line>
              <HazardGrid>
                {hazards.map((h, i) => <PickField key={i} label={`Classe ${i + 1}`} value={h} w={34} />)}
              </HazardGrid>
            </ColumnGroup>
            <ColumnGroup as="div" $fill role="radiogroup" aria-label="Rifiuto destinato a">
              <Line $h={10}>e) Rifiuto destinato a</Line>
              <Line $h={10}><Choice><Radio name="dest" />Non Specificato</Choice></Line>
              <Line $h={10}><Choice><Radio name="dest" />Deposito Temporaneo</Choice></Line>
              <Line $h={10}><Choice><Radio name="dest" defaultChecked />Smaltimento</Choice></Line>
              <Line><PickField label="Smaltimento 1" value="D15" w={43} /><Inset $w={67} $h={13}>Deposito preliminare</Inset></Line>
              <Line><PickField label="Smaltimento 2" w={43} /><Inset $w={67} $h={13} /></Line>
              <Line $h={12}><Choice><Radio name="dest" />Recupero</Choice></Line>
              <Line><PickField label="Recupero 1" w={43} off /><Inset $w={67} $h={13} /></Line>
              <Line><PickField label="Recupero 2" w={43} off /><Inset $w={67} $h={13} /></Line>
            </ColumnGroup>
          </Column>

          <Column>
            <ColumnGroup $fill>
              <Legend>Quantità</Legend>
              <Line $h={11} $top={4}><Caption htmlFor="kg">Kg:</Caption></Line>
              <Line $h={17}><TextField id="kg" value="660" w={54} tone="blue" right /></Line>
              {["Litri", "Metri cubi", "Numero"].map((n) => (
                <React.Fragment key={n}>
                  <Line $h={11}><Caption htmlFor={n}>{n}:</Caption></Line>
                  <Line $h={17}>
                    <TextField id={n} w={54} />
                    <ToolButton $w={21} $h={17} aria-label={`Calcola ${n}`}><Art name="scale" size={14} /></ToolButton>
                  </Line>
                </React.Fragment>
              ))}
              <Line $h={20} $top={11}><Choice><Radio name="peso" /><span>Peso verificato<br />all'origine</span></Choice></Line>
              <Line $h={20} $top={11}><Choice><Radio name="peso" defaultChecked /><span>Peso da verificare<br />a destino</span></Choice></Line>
              <Line $h={20}><Choice><Radio name="peso" /><span>Peso verificato a<br />destino</span></Choice></Line>
              <Line $h={12}><Caption htmlFor="pesov">Peso verificato a destino</Caption></Line>
              <Line $h={17}><TextField id="pesov" value="0" w={54} right /></Line>
            </ColumnGroup>
          </Column>

          <Column>
            <ColumnGroup $fill $top={128}>
              <Legend>Intermediario/Commerciante</Legend>
              <PersonRow $h={19}>
                <Caption htmlFor="codice">Codice:</Caption>
                <PersonFields>
                  <PickField id="codice" w={38} />
                  <Spacer $w={6} />
                  <ToolButton $w={17} $h={18} aria-label="Soggetti"><Art name="people" size={13} /></ToolButton>
                </PersonFields>
              </PersonRow>
              <PersonRow $h={23}><Caption htmlFor="ragione">Ragione</Caption><PersonFields><TextField id="ragione" h={23} /></PersonFields></PersonRow>
              <PersonRow><Caption htmlFor="indirizzo">Indirizzo</Caption><PersonFields><TextField id="indirizzo" /></PersonFields></PersonRow>
              <PersonRow><Caption htmlFor="prov">Provincia</Caption><PersonFields><PickField id="prov" value="0" w={42} /><Inset>&lt;Inesistente&gt;</Inset></PersonFields></PersonRow>
              <PersonRow><Caption htmlFor="citta">Città</Caption><PersonFields><PickField id="citta" value="0" w={42} /><Inset>&lt;Inesistente&gt;</Inset></PersonFields></PersonRow>
              <PersonRow><Caption htmlFor="cap">CAP</Caption><PersonFields><TextField id="cap" w={40} /></PersonFields></PersonRow>
              <PersonRow><Caption htmlFor="cf">C.F.</Caption><PersonFields><TextField id="cf" /></PersonFields></PersonRow>
              <PersonRow><Caption htmlFor="albo">Iscrizione<br />Albo N.</Caption><PersonFields><TextField id="albo" /></PersonFields></PersonRow>
            </ColumnGroup>
          </Column>

          <Column>
            <ColumnGroup $fill>
              <Legend>Annotazioni</Legend>
              <Line $h={15} $gap={1}>
                <Caption $w={51} htmlFor="nota1">Nota Codificata:</Caption>
                <ToolButton $w={16} $h={14} aria-label="Cerca nota"><PickIcon size={10} /></ToolButton>
                <ToolButton $w={16} $h={14} aria-label="Modifica nota"><Art name="pen" size={11} /></ToolButton>
              </Line>
              <ScrollBox $grow={124}><TextArea id="nota1" /></ScrollBox>
              <Line $h={12}><Caption htmlFor="nota2">Nota Interna (non in stampa)</Caption></Line>
              <ScrollBox $grow={115}>
                <TextArea id="nota2" />
                <ScrollRail><Chevron color="#aaa" /><Chevron color="#aaa" /></ScrollRail>
              </ScrollBox>
              <Line $h={2} />
            </ColumnGroup>
          </Column>
        </Sheet>
        <FrontStatus>
          <svg width="8" height="8" viewBox="0 0 8 8" aria-hidden="true">
            <path d="M6 1h1M4 3h3M2 5h5" stroke="#bbb" strokeDasharray="1 1" />
          </svg>
        </FrontStatus>
      </FrontBody>
    </FrontWindow>
  );
}

export default function App() {
  return (
    <Desktop>
      <GlobalStyle />
      <RegisterWindow />
      <EntryWindow />
    </Desktop>
  );
}
